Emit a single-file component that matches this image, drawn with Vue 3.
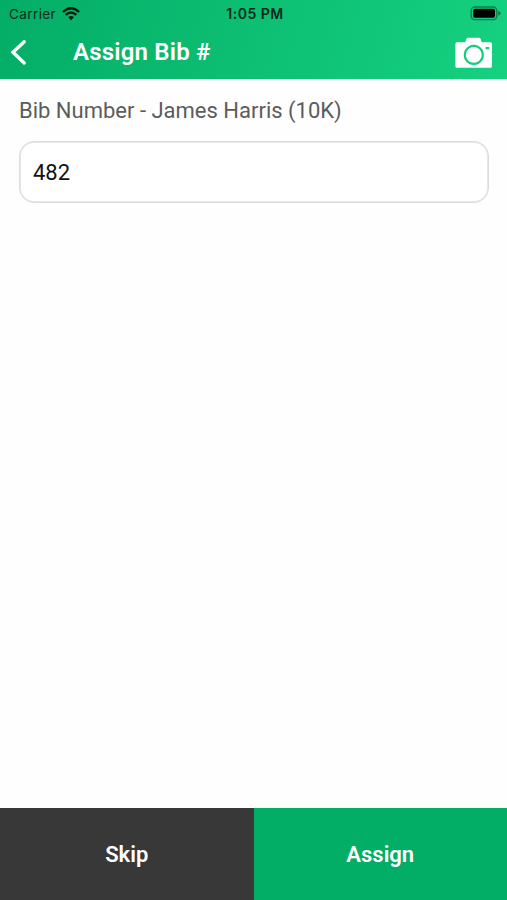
<template>
  <div class="screen">
    <header class="header">
      <!-- Status bar -->
      <div class="status-bar">
        <div class="carrier">
          <span>Carrier</span>
          <svg class="wifi" width="18" height="14" viewBox="0 0 18 14">
            <path d="M0.9 5 Q9 -2.6 17.1 5" />
            <path d="M3.7 7.9 Q9 3 14.3 7.9" />
            <path class="wifi-dot" d="M6.1 10.2 Q9 7.6 11.9 10.2 L9 13.2 Z" />
          </svg>
        </div>
        <span class="time">1:05 PM</span>
        <svg class="battery" width="31" height="15" viewBox="0 0 31 15">
          <rect class="battery-frame" x="1.2" y="1" width="25.6" height="12.6" rx="3.6" />
          <rect x="3.2" y="2.8" width="21.8" height="9" rx="1.8" />
          <path class="battery-cap" d="M28.2 4.8 Q30.6 5.6 30.6 7.3 Q30.6 9 28.2 9.8 Z" />
        </svg>
      </div>

      <!-- Title bar -->
      <div class="nav-bar">
        <button type="button" class="btn-back" aria-label="Back">
          <svg width="18" height="27" viewBox="0 0 18 27">
            <path d="M15.2 2.7 L4 13.3 L15.2 23.9" />
          </svg>
        </button>
        <h1 class="title">{{ title }}</h1>
        <button type="button" class="btn-camera" aria-label="Scan">
          <svg width="37" height="31" viewBox="0 0 37 31">
            <path
              fill-rule="evenodd"
              d="M1.9 5.2 H10.3 L11.3 2 Q11.8 0.7 13.2 0.7 H23.8 Q25.2 0.7 25.7 2 L26.7 5.2 H35.4 Q37 5.2 37 6.8 V29.2 Q37 30.8 35.4 30.8 H2 Q0.4 30.8 0.4 29.2 V6.8 Q0.4 5.2 1.9 5.2 Z M18.8 7.8 a10.1 10.1 0 1 0 0.01 0 Z M18.8 10 a7.9 7.9 0 1 1 -0.01 0 Z M31.4 10 a1.1 1.1 0 0 0 0 2.2 h2 a1.1 1.1 0 0 0 0 -2.2 Z"
            />
          </svg>
        </button>
      </div>
    </header>

    <main class="content">
      <label class="bib-label" for="bib">Bib Number - {{ runner.name }} ({{ runner.race }})</label>
      <input id="bib" v-model="bibNumber" class="bib-input" type="text" inputmode="numeric" />
    </main>

    <footer class="actions">
      <button type="button" class="btn-skip">Skip</button>
      <button type="button" class="btn-assign">Assign</button>
    </footer>
  </div>
</template>

<script setup>
import { ref } from "vue";

const title = "Assign Bib #";
const runner = { name: "James Harris", race: "10K" };
const bibNumber = ref("482");
</script>

<style>
body {
  margin: 0;
  background: #fff;
}
</style>

<style scoped>
.screen {
  display: flex;
  flex-direction: column;
  height: 100vh;
  overflow: hidden;
  background: #fefefe;
  font-family: Roboto, "Liberation Sans", sans-serif;
}

button {
  padding: 0;
  border: none;
  background: none;
  font-family: inherit;
  cursor: pointer;
}

svg {
  display: block;
}

/* Header */
.header {
  height: 79px;
  background: linear-gradient(105deg, #04ad66 0%, #15d180 100%);
}

.status-bar {
  display: grid;
  grid-template-columns: 1fr auto 1fr;
  align-items: center;
  height: 27px;
  padding: 0 6px 0 9px;
  color: #052b18;
  font-family: Inter, "Liberation Sans", sans-serif;
  font-size: 13.5px;
}

.carrier {
  display: flex;
  align-items: center;
  gap: 6px;
  letter-spacing: 0.4px;
}

.wifi {
  fill: none;
  stroke: #031a0e;
  stroke-width: 2.3;
}

.wifi .wifi-dot {
  fill: #031a0e;
  stroke: none;
}

.time {
  font-size: 14px;
  font-weight: 600;
  letter-spacing: 0.5px;
}

.battery {
  justify-self: end;
}

.battery-frame {
  fill: none;
  stroke: #0b7e4c;
  stroke-width: 1.4;
}

.battery-cap {
  fill: #0b7e4c;
}

.nav-bar {
  display: flex;
  align-items: center;
  height: 51px;
  padding: 0 15px 0 9px;
}

.btn-back {
  width: 64px;
}

.btn-back path {
  fill: none;
  stroke: #fff;
  stroke-width: 3.4;
  stroke-linecap: round;
}

.title {
  flex: 1;
  margin: 0;
  color: #fff;
  font-size: 24px;
  font-weight: 600;
  line-height: 29px;
  letter-spacing: 0.2px;
}

.btn-camera path {
  fill: #fff;
}

/* Form */
.content {
  flex: 1;
  padding: 18px 18px 0 19px;
}

.bib-label {
  display: block;
  color: #5c5c5c;
  font-size: 22px;
  line-height: 28px;
}

.bib-input {
  display: block;
  box-sizing: border-box;
  width: 100%;
  height: 62px;
  margin-top: 16px;
  padding: 0 13px;
  border: 1px solid #dcdcdc;
  border-radius: 15px;
  outline: none;
  background: #fff;
  box-shadow: inset 0 0 0 1px #e6e6e6;
  color: #111;
  font-family: inherit;
  font-size: 22px;
}

/* Bottom buttons */
.actions {
  display: grid;
  grid-template-columns: 1fr 1fr;
  height: 92px;
}

.actions button {
  color: #fff;
  font-size: 22px;
  font-weight: 600;
}

.actions .btn-skip {
  background: #383838;
}

.actions .btn-assign {
  background: #02ad66;
}
</style>
